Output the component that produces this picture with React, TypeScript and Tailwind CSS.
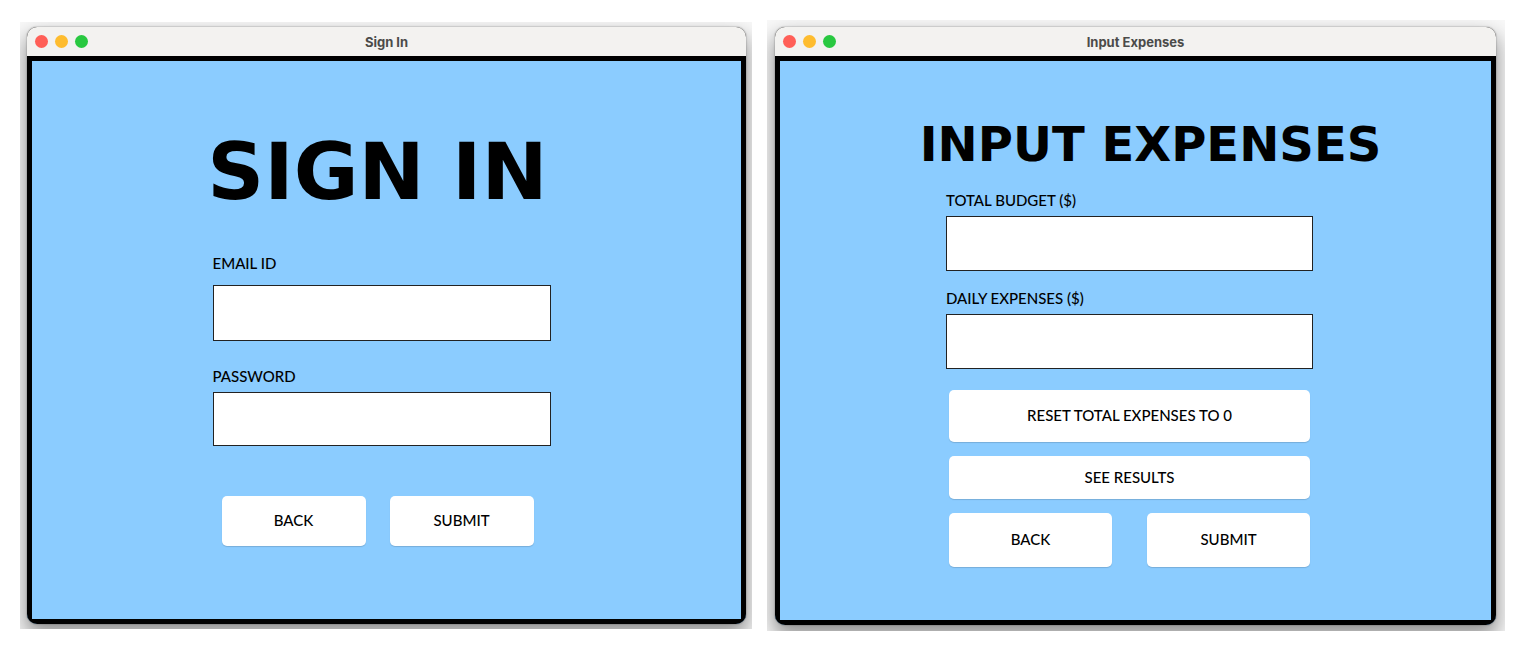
import { useId } from "react";
import type { ReactNode } from "react";

function AppWindow({ title, className, children }: { title: string; className: string; children: ReactNode }) {
  return (
    <section className={`overflow-hidden bg-[#f8f8f8] ${className}`}>
      <div className="overflow-hidden rounded-[10px] bg-black shadow-[0_0_1px_1px_rgba(0,0,0,0.12),0_10px_20px_2px_rgba(0,0,0,0.4)]">
        <header className="grid h-[29px] grid-cols-[1fr_auto_1fr] items-center bg-[#f3f2f0] px-2">
          <div className="flex gap-[7px]">
            <span className="size-[13px] rounded-full bg-[#ff5f57]" />
            <span className="size-[13px] rounded-full bg-[#febc2e]" />
            <span className="size-[13px] rounded-full bg-[#28c840]" />
          </div>
          <h2 className="font-[Inter,sans-serif] text-[13px] leading-4 font-bold text-[#4b4b49]">{title}</h2>
        </header>
        <div className="border-5 border-black bg-[#8bccff]">{children}</div>
      </div>
    </section>
  );
}

function Field({ label, type, className, inputClass }: { label: string; type: string; className: string; inputClass: string }) {
  const id = useId();
  return (
    <div className={`flex flex-col ${className}`}>
      <label htmlFor={id} className="text-[15px] leading-5 font-medium">
        {label}
      </label>
      <input id={id} type={type} className={`w-full border border-[#222] bg-white px-2 outline-none ${inputClass}`} />
    </div>
  );
}

function Button({ className, children }: { className: string; children: ReactNode }) {
  return (
    <button
      type="button"
      className={`rounded-[5px] bg-white pb-[2px] text-[15px] leading-5 font-medium shadow-[0_1px_1px_rgba(0,0,0,0.15)] ${className}`}
    >
      {children}
    </button>
  );
}

export default function App() {
  return (
    <main className="grid grid-cols-[732fr_738fr] items-start gap-[15px] bg-white px-5 pt-5 font-[Lato,sans-serif] text-black">
      <AppWindow title="Sign In" className="mt-[2px] pt-[5px] pr-[6px] pb-[5px] pl-[7px]">
        <form className="flex flex-col items-center pt-[71px] pr-[10px] pb-[73px]">
          <h1 className="pr-2 text-center font-['DejaVu_Sans',sans-serif] text-[79px] leading-20 font-bold whitespace-nowrap">SIGN IN</h1>
          <div className="flex w-[338px] flex-col pt-[41px]">
            <Field label="EMAIL ID" type="email" className="gap-3" inputClass="h-14" />
            <Field label="PASSWORD" type="password" className="mt-[25px] gap-[6px]" inputClass="h-[54px]" />
            <div className="mt-[50px] flex gap-6 pr-[17px] pl-[9px]">
              <Button className="h-[50px] flex-1">BACK</Button>
              <Button className="h-[50px] flex-1">SUBMIT</Button>
            </div>
          </div>
        </form>
      </AppWindow>
      <AppWindow title="Input Expenses" className="pt-[7px] pr-[9px] pb-[6px] pl-2">
        <form className="flex flex-col items-center pt-[52px] pb-[53px]">
          <h1 className="pl-[30px] text-center font-['DejaVu_Sans',sans-serif] text-[48px] leading-[62px] font-bold whitespace-nowrap">
            INPUT EXPENSES
          </h1>
          <div className="mr-3 flex w-[367px] flex-col pt-[15px]">
            <Field label="TOTAL BUDGET ($)" type="text" className="gap-[6px]" inputClass="h-[55px]" />
            <Field label="DAILY EXPENSES ($)" type="text" className="mt-[17px] gap-[6px]" inputClass="h-[55px]" />
            <div className="mt-[21px] flex flex-col gap-[14px] px-[3px]">
              <Button className="h-[52px]">RESET TOTAL EXPENSES TO 0</Button>
              <Button className="h-[43px]">SEE RESULTS</Button>
              <div className="flex gap-[35px]">
                <Button className="h-[54px] flex-1">BACK</Button>
                <Button className="h-[54px] flex-1">SUBMIT</Button>
              </div>
            </div>
          </div>
        </form>
      </AppWindow>
    </main>
  );
}
